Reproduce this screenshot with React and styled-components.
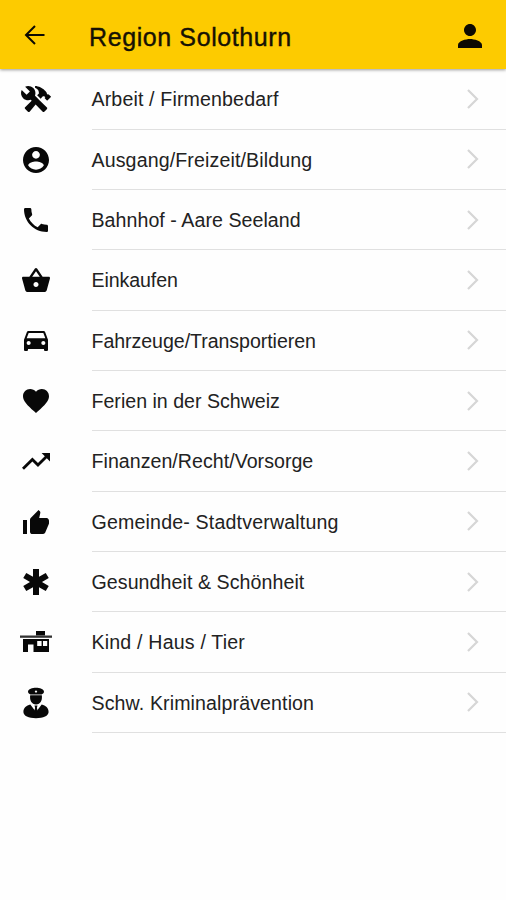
import React from 'react';
import styled, { createGlobalStyle } from 'styled-components';
import {
  IoMdConstruct, IoMdContact, IoMdCall, IoMdBasket, IoMdCar, IoMdHeart,
  IoMdTrendingUp, IoMdThumbsUp, IoMdMedical, IoMdPerson,
} from 'react-icons/io';

const GlobalStyle = createGlobalStyle`
  body {
    margin: 0;
    background: #fefefe;
    font-family: "Liberation Sans", Arial, Helvetica, sans-serif;
    overflow: hidden;
  }
`;

const Screen = styled.div`
  width: 506px;
  height: 900px;
  background: #fefefe;
`;

const Header = styled.header`
  position: relative;
  display: flex;
  align-items: center;
  box-sizing: border-box;
  height: 69px;
  padding: 2px 20px 0 19px;
  background: #fdcb00;
  box-shadow: 0 1px 3px rgba(0, 0, 0, 0.4);
`;

const IconButton = styled.button`
  display: flex;
  justify-content: center;
  width: 32px;
  padding: 0;
  border: 0;
  background: none;
  color: #0c0a02;
`;

const Title = styled.h1`
  flex: 1;
  margin: 2px 0 0 38px;
  font-size: 25px;
  font-weight: 400;
  line-height: 32px;
  letter-spacing: 0.6px;
  color: #161204;
  -webkit-text-stroke: 0.4px #161204;
  white-space: nowrap;
`;

const List = styled.ul`
  margin: 0;
  padding: 0.3px 0 0;
  list-style: none;
`;

const Row = styled.li`
  display: flex;
  height: 60.33px;
`;

const IconSlot = styled.div`
  display: flex;
  align-items: center;
  justify-content: center;
  width: 72px;
  margin-right: 19.5px;
  color: #080808;
`;

const RowBody = styled.div`
  display: flex;
  flex: 1;
  align-items: center;
  justify-content: space-between;
  box-sizing: border-box;
  padding-right: 26px;
  border-bottom: 1px solid #e0e0e0;
`;

const Label = styled.span`
  padding-top: 1px;
  font-size: 19.6px;
  line-height: 28px;
  letter-spacing: ${(p) => p.$tracking}px;
  color: #222;
  white-space: nowrap;
`;

const BackArrow = () => (
  <svg width="22" height="22" viewBox="0 0 22 22" fill="none" stroke="currentColor" strokeWidth="2">
    <path d="M20.500 10H2.400M11 1L2 10l9 9" />
  </svg>
);

const Chevron = () => (
  <svg width="14" height="22" viewBox="0 0 14 22" fill="none" stroke="#d6d6d6" strokeWidth="2.2">
    <path d="M2 2l9 9-9 9" />
  </svg>
);

const House = () => (
  <svg width="32" height="24" viewBox="0 0 32 24" fill="currentColor">
    <path d="M16 1h9v4.500h-9z" />
    <path d="M0 5.500h32v2.300H0z" fill="#333" />
    <path d="M3 9h26v13H13.500V14.500H8V22H3zM17.200 11v5h4.400v-5zM23 11v5h4.200v-5z" fillRule="evenodd" />
  </svg>
);

const Officer = () => (
  <svg width="28" height="32" viewBox="0 0 28 32" fill="currentColor">
    <path d="M14 .8c3.500 0 8 1.500 8 3.900 0 1.500-1.600 2.100-2.400 2.800H8.400C7.600 6.800 6 6.200 6 4.700 6 2.300 10.500.8 14 .8z" />
    <path d="M8.200 8.300h11.600c.8 5-1.400 9.200-5.800 9.200s-6.600-4.200-5.800-9.200z" />
    <path d="M8.300 17.500L14 25l5.700-7.500c3.900.9 6.900 3.500 6.900 7.500 0 3.800-5.200 6.200-12.600 6.200S1.400 28.800 1.400 25c0-4 3-6.600 6.900-7.500z" />
    <path d="M12.500 18.500h3l-.6 2.200.8 3.300L14 26l-1.700-2 .8-3.300z" />
    <path d="M12.700 4.500L14 3.300l1.300 1.200L14 6z" fill="#fff" />
  </svg>
);

const categories = [
  { label: 'Arbeit / Firmenbedarf', icon: IoMdConstruct, tracking: 0.14 },
  { label: 'Ausgang/Freizeit/Bildung', icon: IoMdContact, tracking: 0.12 },
  { label: 'Bahnhof - Aare Seeland', icon: IoMdCall, tracking: 0.05 },
  { label: 'Einkaufen', icon: IoMdBasket, tracking: -0.1 },
  { label: 'Fahrzeuge/Transportieren', icon: IoMdCar, tracking: -0.06 },
  { label: 'Ferien in der Schweiz', icon: IoMdHeart, tracking: 0 },
  { label: 'Finanzen/Recht/Vorsorge', icon: IoMdTrendingUp, tracking: 0.03 },
  { label: 'Gemeinde- Stadtverwaltung', icon: IoMdThumbsUp, tracking: 0.17 },
  { label: 'Gesundheit & Schönheit', icon: IoMdMedical, tracking: 0.07 },
  { label: 'Kind / Haus / Tier', icon: House, tracking: 0.18 },
  { label: 'Schw. Kriminalprävention', icon: Officer, tracking: 0.11 },
];

export default function App() {
  return (
    <Screen>
      <GlobalStyle />
      <Header>
        <IconButton aria-label="Zurück"><BackArrow /></IconButton>
        <Title>Region Solothurn</Title>
        <IconButton aria-label="Profil"><IoMdPerson size={32} /></IconButton>
      </Header>
      <List>
        {categories.map(({ label, icon: Icon, tracking }) => (
          <Row key={label}>
            <IconSlot><Icon size={32} /></IconSlot>
            <RowBody>
              <Label $tracking={tracking}>{label}</Label>
              <Chevron />
            </RowBody>
          </Row>
        ))}
      </List>
    </Screen>
  );
}
